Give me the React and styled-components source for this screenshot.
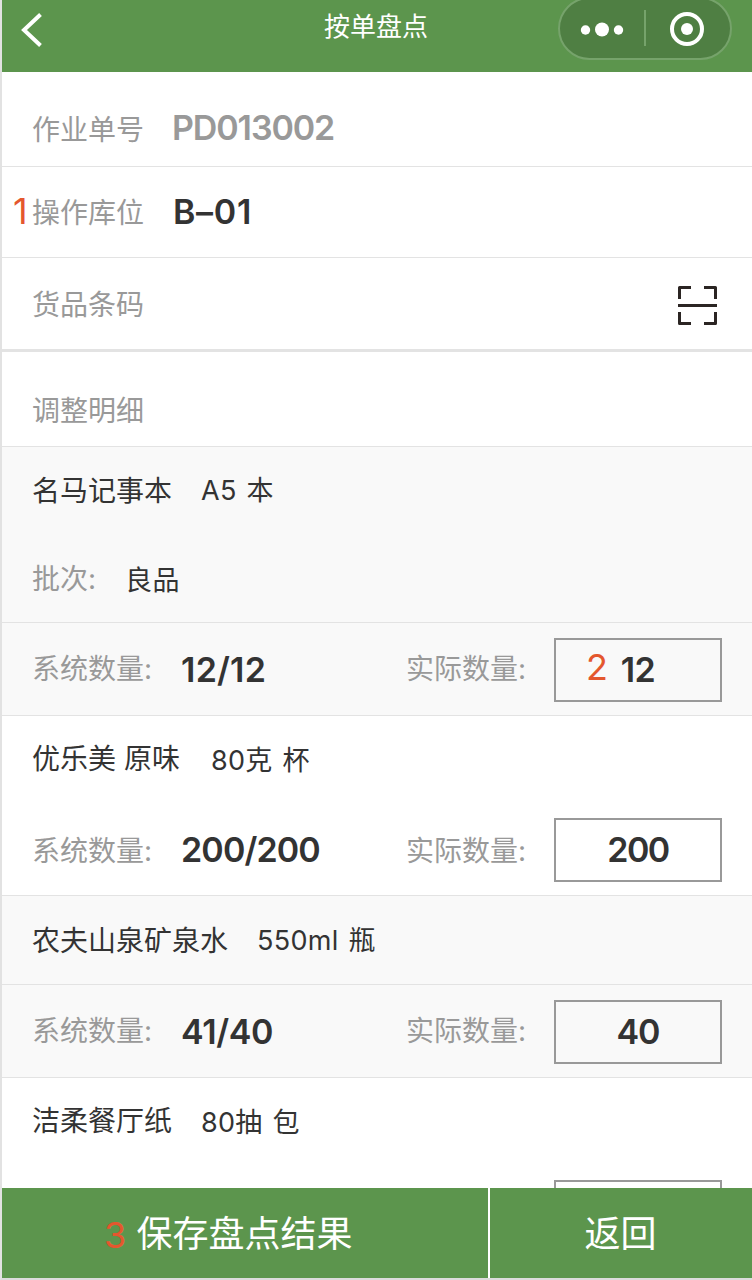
import React from 'react';
import styled, { createGlobalStyle } from 'styled-components';

const GlobalStyle = createGlobalStyle`
  * {
    box-sizing: border-box;
  }

  body {
    margin: 0;
    background: #fff;
    font-family: Inter, "Noto Sans CJK SC", sans-serif;
    color: #333;
  }
`;

const Page = styled.div`
  display: flex;
  flex-direction: column;
  width: 752px;
  height: 1280px;
  border-left: 2px solid #e2e2e2;
  border-bottom: 2px solid #dcdcdc;
  background: #fff;
  overflow: hidden;
`;

// Top bar
const Header = styled.header`
  display: grid;
  grid-template-columns: 1fr auto 1fr;
  flex: none;
  height: 72px;
  padding: 0 20px 0 18px;
  background: #5c954d;
  color: #fff;
`;

const BackIcon = styled.svg`
  width: 24px;
  height: 36px;
  margin-top: 12px;
`;

const PageTitle = styled.h1`
  margin: 7px 0 0;
  font-size: 26px;
  font-weight: 400;
  line-height: 40px;
`;

const Capsule = styled.div`
  display: flex;
  justify-self: end;
  width: 174px;
  height: 63px;
  margin-top: -3px;
  border: 2px solid #76a36b;
  border-radius: 32px;
  background: #4f7f43;
`;

// Rows
const Row = styled.div`
  display: flex;
  flex: none;
  align-items: flex-start;
  position: relative;
  height: ${(props) => props.$height}px;
  padding: ${(props) => props.$top}px 30px 0;
  background: ${(props) => (props.$shaded ? '#f9f9f9' : '#fff')};
  border-bottom: ${(props) => (props.$line ?? 1)}px solid #e3e3e3;
`;

const Label = styled.span`
  flex: none;
  width: ${(props) => (props.$width ? `${props.$width}px` : 'auto')};
  font-size: 28px;
  line-height: 40px;
  color: ${(props) => (props.$dark ? '#333' : '#999')};
  white-space: pre;
`;

const Detail = styled.span`
  margin: ${(props) => props.$drop || 0}px 0 0 ${(props) => props.$gap || 29}px;
  font-size: 27px;
  line-height: 40px;
  letter-spacing: 0.3px;
  word-spacing: 2px;
  white-space: pre;
`;

const Value = styled.strong`
  display: block;
  margin-top: ${(props) => props.$drop || 0}px;
  font-size: 34px;
  font-weight: 600;
  line-height: 40px;
  letter-spacing: ${(props) => props.$spacing ?? -0.6}px;
  color: ${(props) => (props.$muted ? '#999' : '#333')};
`;

const ScanIcon = styled.svg`
  width: 40px;
  height: 40px;
  margin: 1px 4px 0 auto;
`;

const Quantity = styled.div`
  width: 225px;
  margin-left: 29px;
`;

const CountBox = styled.div`
  display: flex;
  align-items: center;
  justify-content: center;
  position: relative;
  width: 168px;
  height: 64px;
  margin: ${(props) => props.$offset ?? -11}px 0 0 auto;
  border: 2px solid #999;
`;

const Step = styled.span`
  position: absolute;
  left: ${(props) => props.$left}px;
  top: ${(props) => props.$top}px;
  font-size: 36px;
  font-weight: 400;
  line-height: 40px;
  color: #e4572e;
`;

const List = styled.main`
  flex: 1;
  min-height: 0;
  overflow: hidden;
  display: flex;
  flex-direction: column;
`;

// Bottom buttons
const Footer = styled.footer`
  display: grid;
  grid-template-columns: 486px 1fr;
  gap: 2px;
  flex: none;
  height: 90px;
`;

const FooterButton = styled.button`
  position: relative;
  border: 0;
  padding: 2px 1px 0 0;
  background: #5c954d;
  color: #fff;
  font-family: inherit;
  font-size: 36px;
  font-weight: 400;
  line-height: 40px;
`;

const CountRow = ({ system, actual, height, shaded, step, spacing, actualSpacing, drop, offset }) => (
  <Row $height={height} $top={26} $shaded={shaded}>
    <Label>系统数量:</Label>
    <Quantity>
      <Value $spacing={spacing} $drop={drop}>{system}</Value>
    </Quantity>
    <Label>实际数量:</Label>
    <CountBox $offset={offset}>
      {step && <Step $left={30} $top={7}>{step}</Step>}
      <Value $spacing={actualSpacing}>{actual}</Value>
    </CountBox>
  </Row>
);

const App = () => {
  return (
    <>
      <GlobalStyle />
      <Page>
        <Header>
          <BackIcon viewBox="0 0 24 36" fill="none" stroke="#fff" strokeWidth="4">
            <path d="M20.5 2.5 4 18l16.500 15.500" />
          </BackIcon>
          <PageTitle>按单盘点</PageTitle>
          <Capsule>
            <svg width="170" height="59" viewBox="0 0 170 59">
              <g fill="#fff">
                <circle cx="25.500" cy="31" r="4.700" />
                <circle cx="42" cy="30.500" r="7" />
                <circle cx="58.500" cy="31" r="4.700" />
                <circle cx="127" cy="30" r="6" />
              </g>
              <path d="M85 11v36" stroke="#76a36b" strokeWidth="2" />
              <circle cx="127" cy="30" r="15" fill="none" stroke="#fff" strokeWidth="4" />
            </svg>
          </Capsule>
        </Header>
        <List>
          <Row $height={95} $top={38}>
            <Label $width={140}>作业单号</Label>
            <Value $muted $drop={-2} $spacing={-1.1}>PD013002</Value>
          </Row>
          <Row $height={91} $top={26}>
            <Step $left={11} $top={24}>1</Step>
            <Label $width={141}>操作库位</Label>
            <Value $drop={-1} $spacing={0.7}>B–01</Value>
          </Row>
          <Row $height={94} $top={27} $line={3}>
            <Label>货品条码</Label>
            <ScanIcon viewBox="0 0 40 40" fill="none" stroke="#2b2523" strokeWidth="3" strokeLinejoin="round">
              <path d="M1.500 13V1.500H13M26 1.500h11.500V13M1.500 26v11.500H13M26 37.500h11.500V26M0 19.500h39" />
            </ScanIcon>
          </Row>
          <Row $height={95} $top={39}>
            <Label>调整明细</Label>
          </Row>

          <Row $height={88} $top={24} $line={0} $shaded>
            <Label $dark>名马记事本</Label>
            <Detail>A5 本</Detail>
          </Row>
          <Row $height={88} $top={24} $shaded>
            <Label>批次:</Label>
            <Detail $drop={2}>良品</Detail>
          </Row>
          <CountRow
            height={93}
            system="12/12"
            actual="12"
            step="2"
            spacing={0.2}
            drop={1}
            shaded
          />

          <Row $height={89} $top={23} $line={0}>
            <Label $dark>优乐美 原味</Label>
            <Detail $drop={2} $gap={31}>80克 杯</Detail>
          </Row>
          <CountRow
            height={91}
            system="200/200"
            actual="200"
            spacing={-0.9}
            actualSpacing={-1.5}
            drop={-1}
            offset={-13}
          />

          <Row $height={89} $top={25} $shaded>
            <Label $dark>农夫山泉矿泉水</Label>
            <Detail>550ml 瓶</Detail>
          </Row>
          <CountRow
            height={93}
            system="41/40"
            actual="40"
            spacing={-0.4}
            actualSpacing={-1}
            drop={1}
            shaded
          />

          <Row $height={89} $top={23} $line={0}>
            <Label $dark>洁柔餐厅纸</Label>
            <Detail $drop={2}>80抽 包</Detail>
          </Row>
          <Row $height={93} $top={26}>
            <CountBox $offset={-13} />
          </Row>
        </List>
        <Footer>
          <FooterButton>
            <Step $left={102} $top={27}>3</Step>
            保存盘点结果
          </FooterButton>
          <FooterButton>返回</FooterButton>
        </Footer>
      </Page>
    </>
  );
};

export default App;
